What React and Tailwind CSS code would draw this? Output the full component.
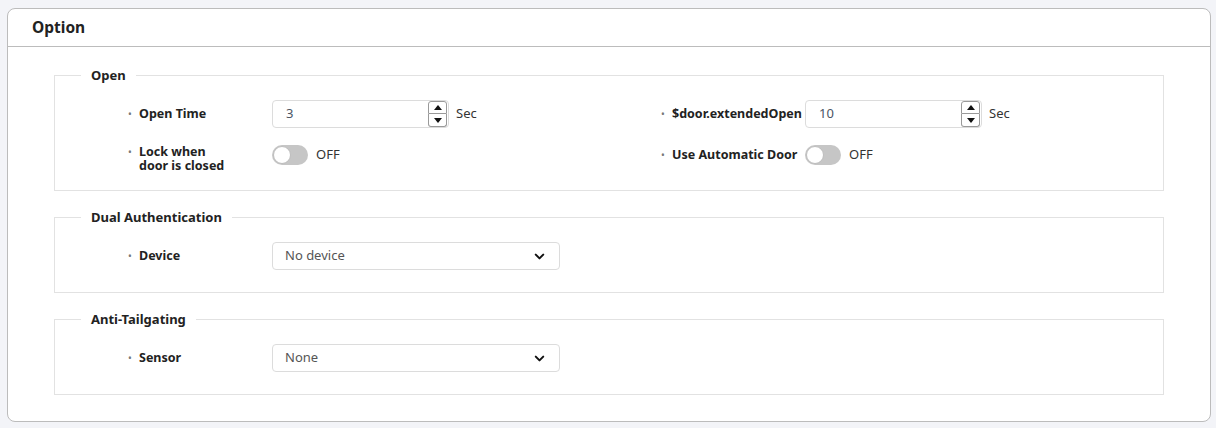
import React from "react";
import { ChevronDown } from "lucide-react";

const FONT = { fontFamily: '"Noto Sans", "Open Sans", sans-serif' };

function Label({ children }) {
  return (
    <div className="flex items-start w-[144px] shrink-0">
      <span className="w-[11px] shrink-0 text-[10px] leading-[14px] text-[#777]">•</span>
      <span className="text-[12.5px] leading-[14px] font-bold text-[#222] whitespace-nowrap">
        {children}
      </span>
    </div>
  );
}

function NumberInput({ value }) {
  return (
    <div className="flex items-center gap-[7px]">
      <div className="relative w-[177px] h-[28px] border border-[#dcdcdc] rounded-[4px] bg-white flex items-center">
        <span className="pl-[13px] text-[13px] text-[#4b5563]">{value}</span>
        <div className="absolute right-[1px] top-[0px] flex flex-col">
          <button className="w-[19px] h-[13px] border border-[#9a9a9a] rounded-t-[3px] bg-white grid place-items-center">
            <svg width="8" height="5" viewBox="0 0 8 5">
              <path d="M0 5 L4 0 L8 5 Z" fill="#111" />
            </svg>
          </button>
          <button className="w-[19px] h-[13px] border border-t-0 border-[#9a9a9a] rounded-b-[3px] bg-white grid place-items-center">
            <svg width="8" height="5" viewBox="0 0 8 5">
              <path d="M0 0 L8 0 L4 5 Z" fill="#111" />
            </svg>
          </button>
        </div>
      </div>
      <span className="text-[13px] text-[#333]">Sec</span>
    </div>
  );
}

function Toggle() {
  return (
    <div className="flex items-center gap-[8px]">
      <div className="w-[36px] h-[20px] rounded-full bg-[#c6c6c6] flex items-center px-[1px]">
        <div className="w-[18px] h-[18px] rounded-full bg-white border border-[#bdbdbd]" />
      </div>
      <span className="text-[13px] text-[#333]">OFF</span>
    </div>
  );
}

function Select({ value }) {
  return (
    <div className="w-[288px] h-[28px] border border-[#dcdcdc] rounded-[4px] bg-white flex items-center justify-between pl-[12px] pr-[12px]">
      <span className="text-[13px] text-[#555]">{value}</span>
      <ChevronDown size={15} strokeWidth={3.2} color="#111" />
    </div>
  );
}

function Group({ title, pb, children }) {
  return (
    <fieldset className={`border border-[#e2e2e2] pt-[15px] ${pb}`}>
      <legend className="ml-[26px] px-[10px] text-[13px] leading-5 font-bold text-[#222]">
        {title}
      </legend>
      {children}
    </fieldset>
  );
}

export default function App() {
  return (
    <div className="min-h-screen bg-[#f3f4f8] pt-[8px] pl-[7px] pr-[6px] pb-[7px]" style={FONT}>
      <div className="w-[1204px] h-[414px] bg-white border border-[#bcbcbc] rounded-[8px] flex flex-col">
        <div className="h-[38px] border-b border-[#bcbcbc] flex items-center pl-[24px]">
          <h2 className="text-[15.5px] font-bold text-[#222]">Option</h2>
        </div>

        <div className="flex flex-col gap-[16px] pt-[18px] px-[46px]">
          <Group title="Open" pb="pb-[17px]">
            <div className="pl-[73px] grid grid-cols-[533px_1fr] gap-y-[17px]">
              <div className="flex items-center">
                <Label>Open Time</Label>
                <NumberInput value="3" />
              </div>
              <div className="flex items-center">
                <Label>$door.extendedOpen</Label>
                <NumberInput value="10" />
              </div>
              <div className="flex items-start">
                <Label>
                  Lock when
                  <br />
                  door is closed
                </Label>
                <Toggle />
              </div>
              <div className="flex items-start">
                <div className="pt-[3px]">
                  <Label>Use Automatic Door</Label>
                </div>
                <Toggle />
              </div>
            </div>
          </Group>

          <Group title="Dual Authentication" pb="pb-[22px]">
            <div className="pl-[73px] flex items-center">
              <Label>Device</Label>
              <Select value="No device" />
            </div>
          </Group>

          <Group title="Anti-Tailgating" pb="pb-[22px]">
            <div className="pl-[73px] flex items-center">
              <Label>Sensor</Label>
              <Select value="None" />
            </div>
          </Group>
        </div>
      </div>
    </div>
  );
}
